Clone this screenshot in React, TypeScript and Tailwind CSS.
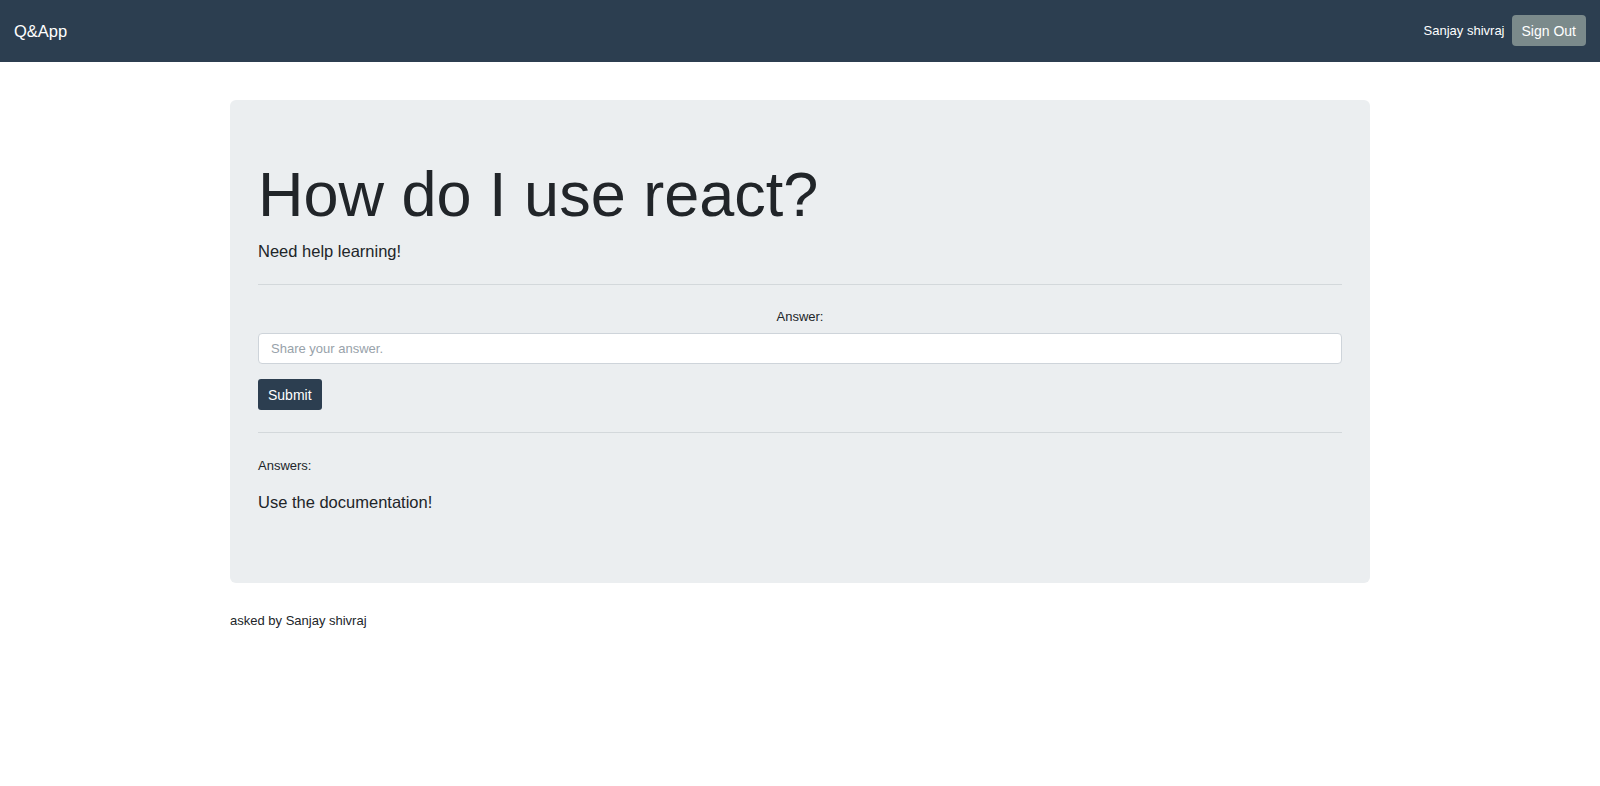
import React from "react";

export default function App() {
  return (
    <div className="min-h-[786px] bg-white text-[#212529] font-['Liberation_Sans',Arial,sans-serif]">
      <nav className="h-[62px] bg-[#2c3e50] flex items-center justify-between px-[14px]">
        <span className="text-[16.5px] leading-[24px] text-white">Q&amp;App</span>
        <div className="flex items-center gap-[7px]">
          <span className="text-[13px] leading-[18px] text-white">Sanjay shivraj</span>
          <button className="h-[31px] px-[10px] rounded-[4px] bg-[#7b8a8b] text-white text-[14px] leading-[18px] mt-[-1px]">
            Sign Out
          </button>
        </div>
      </nav>

      <main className="w-[1140px] mx-auto mt-[38px]">
        <section className="bg-[#ebeef0] rounded-[6px] px-7 pt-[56px] pb-[69px]">
          <h1 className="text-[63px] leading-[76px] font-normal">How do I use react?</h1>
          <p className="mt-[7px] text-[16.5px] leading-[24px]">Need help learning!</p>
          <hr className="mt-[21px] border-0 border-t border-[#d3d8db]" />
          <label className="block mt-[23px] text-center text-[13px] leading-[18px]">Answer:</label>
          <input
            className="mt-[7px] block w-full h-[31px] px-[12px] bg-white border border-[#ced4da] rounded-[4px] text-[13px] outline-none placeholder:text-[#98a2aa]"
            placeholder="Share your answer."
          />
          <button className="mt-[15px] h-[31px] px-[10px] rounded-[3px] bg-[#2c3e50] text-white text-[14px] leading-[18px]">
            Submit
          </button>
          <hr className="mt-[22px] border-0 border-t border-[#d3d8db]" />
          <p className="mt-[24px] text-[13px] leading-[18px]">Answers:</p>
          <p className="mt-[15px] text-[16.5px] leading-[24px]">Use the documentation!</p>
        </section>
        <p className="mt-[29px] text-[13px] leading-[18px]">asked by Sanjay shivraj</p>
      </main>
    </div>
  );
}
